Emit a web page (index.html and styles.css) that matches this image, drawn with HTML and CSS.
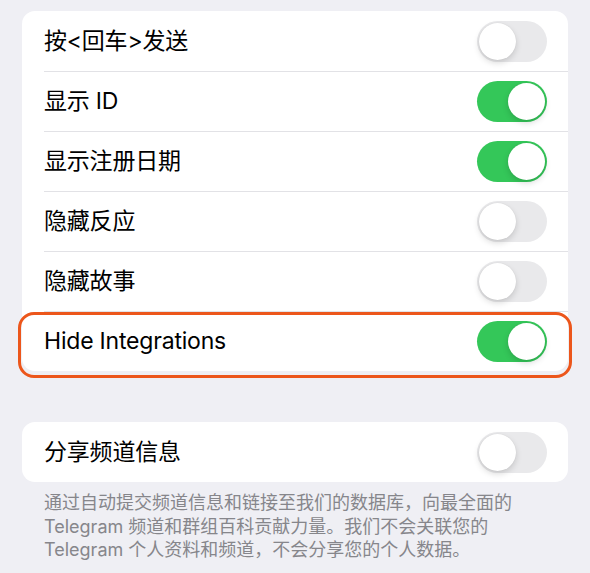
FILE: index.html
```html
<!DOCTYPE html>
<html lang="zh-CN">
<head>
    <meta charset="UTF-8">
    <title>Settings</title>
    <link rel="stylesheet" href="styles.css">
</head>
<body>

<div class="page">
    <div class="group">
        <div class="row">
            <span class="label zh">按&lt;回车&gt;发送</span>
            <span class="switch"><span class="knob"></span></span>
        </div>
        <div class="row">
            <span class="label zh">显示 ID</span>
            <span class="switch on"><span class="knob"></span></span>
        </div>
        <div class="row">
            <span class="label zh">显示注册日期</span>
            <span class="switch on"><span class="knob"></span></span>
        </div>
        <div class="row">
            <span class="label zh">隐藏反应</span>
            <span class="switch"><span class="knob"></span></span>
        </div>
        <div class="row">
            <span class="label zh">隐藏故事</span>
            <span class="switch"><span class="knob"></span></span>
        </div>
        <div class="row highlight">
            <span class="label">Hide Integrations</span>
            <span class="switch on"><span class="knob"></span></span>
        </div>
    </div>

    <div class="group second">
        <div class="row">
            <span class="label zh">分享频道信息</span>
            <span class="switch"><span class="knob"></span></span>
        </div>
    </div>

    <p class="note">通过自动提交频道信息和链接至我们的数据库，向最全面的 Telegram 频道和群组百科贡献力量。我们不会关联您的 Telegram 个人资料和频道，不会分享您的个人数据。</p>
</div>

</body>
</html>
```

FILE: styles.css
```css
body {
    margin: 0;
    background-color: #efeff4;
    font-family: 'Inter', 'Noto Sans CJK SC', sans-serif;
    color: #000;
}

.page {
    padding: 11px 22px 0 22px;
}

.group {
    background-color: #fff;
    border-radius: 13px;
}

.group.second {
    margin-top: 51px;
}

.row {
    position: relative;
    display: flex;
    align-items: center;
    justify-content: space-between;
    height: 60px;
    padding: 0 21px 0 22px;
}

/* hairline between rows, inset like iOS */
.row + .row::before {
    content: '';
    position: absolute;
    top: 0;
    left: 22px;
    right: 0;
    height: 1px;
    background-color: #e2e2e6;
}

.label {
    font-size: 23px;
    letter-spacing: -0.2px;
}

/* CJK glyphs sit low in the line box, lift them a bit */
.label.zh {
    margin-bottom: 5px;
}

/* orange marker drawn around the last row */
.highlight::after {
    content: '';
    position: absolute;
    top: 1px;
    bottom: -7px;
    left: -4px;
    right: -4px;
    border: 3px solid #ec561b;
    border-radius: 16px;
}

.switch {
    position: relative;
    width: 70px;
    height: 41px;
    border-radius: 21px;
    background-color: #e9e9eb;
    flex-shrink: 0;
}

.switch .knob {
    position: absolute;
    top: 2px;
    left: 2px;
    width: 37px;
    height: 37px;
    border-radius: 50%;
    background-color: #fff;
    box-shadow: 0 3px 6px rgba(0, 0, 0, 0.15), 0 0 1px rgba(0, 0, 0, 0.12);
}

.switch.on {
    background-color: #34c759;
}

.switch.on .knob {
    left: 31px;
}

.note {
    margin: 9px 0 0 0;
    padding: 0 20px 0 22px;
    font-size: 18px;
    line-height: 23.5px;
    color: #86868b;
}
```
